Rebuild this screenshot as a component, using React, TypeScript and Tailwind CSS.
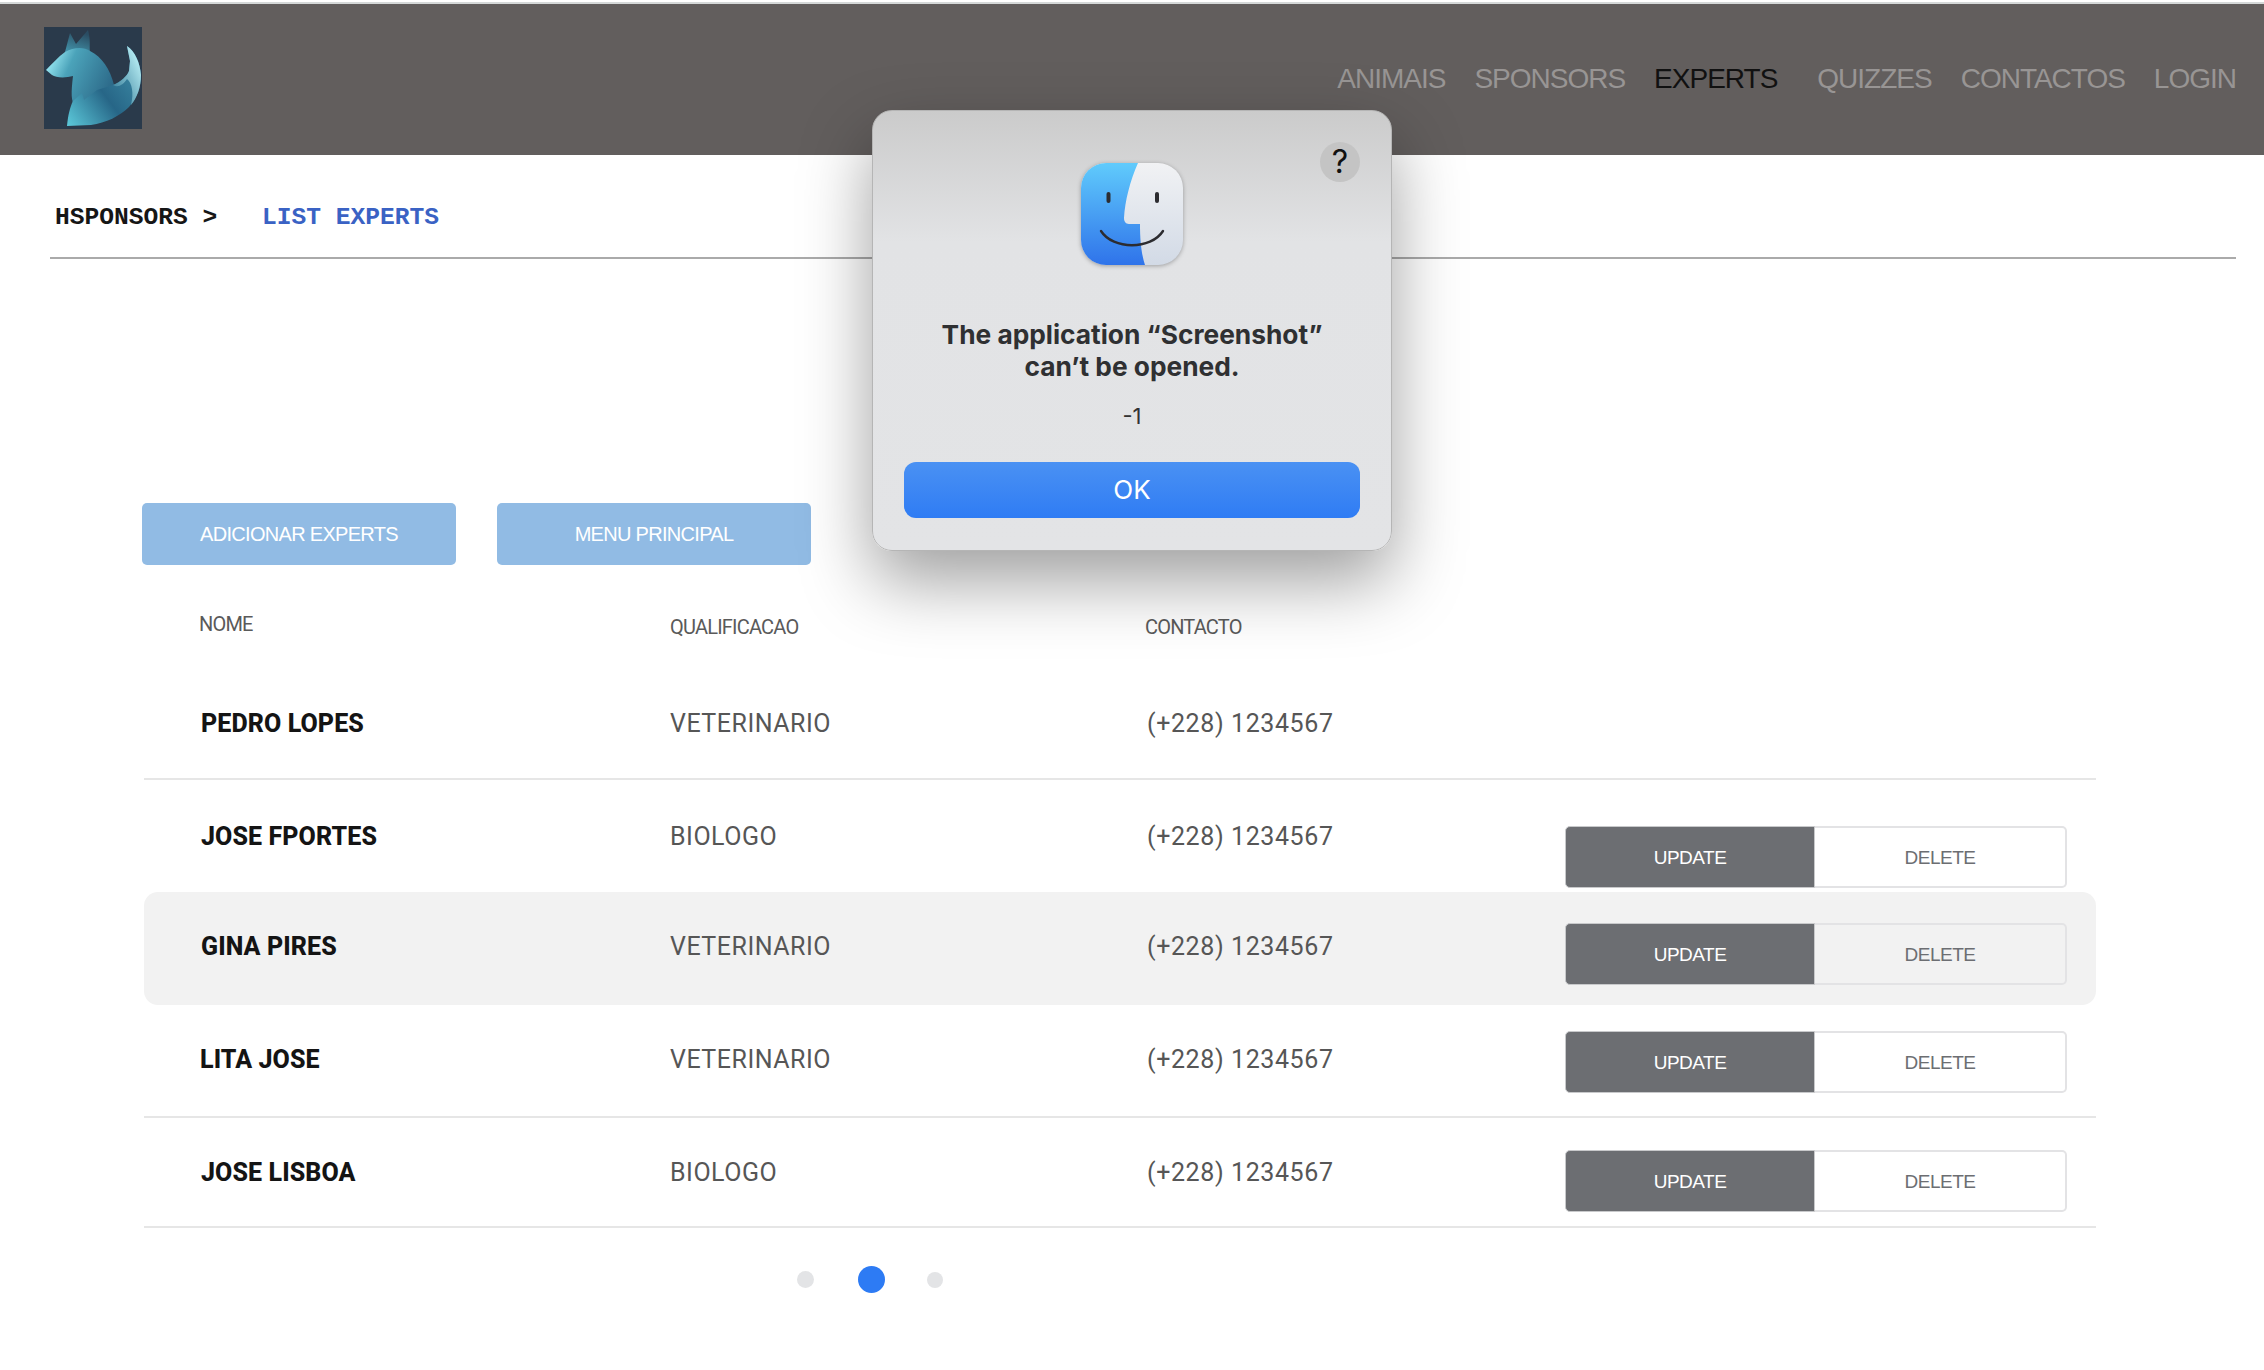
const rows = [
  { name: 'PEDRO LOPES', job: 'VETERINARIO', row: 'h-[113px] border-b-2 border-[#e6e6e6]', actions: false, btn: '', cell: 'bg-white', nameCls: 'pl-[57px]', shift: 'mt-[2px]' },
  { name: 'JOSE FPORTES', job: 'BIOLOGO', row: 'h-[112px]', actions: true, btn: 'mt-[42px]', cell: 'bg-white', nameCls: 'pl-[57px]', shift: 'mt-[2px]' },
  { name: 'GINA PIRES', job: 'VETERINARIO', row: 'h-[113px] rounded-[14px] bg-[#f2f2f2]', actions: true, btn: 'mt-[10px]', cell: 'bg-[#f2f2f2]', nameCls: 'pl-[57px]', shift: 'mb-[3px]' },
  { name: 'LITA JOSE', job: 'VETERINARIO', row: 'h-[113px] border-b-2 border-[#e6e6e6]', actions: true, btn: 'mt-[2px]', cell: 'bg-white', nameCls: 'pl-[56px]', shift: 'mb-[2px]' },
  { name: 'JOSE LISBOA', job: 'BIOLOGO', row: 'h-[110px] border-b-2 border-[#e6e6e6]', actions: true, btn: 'mt-[17px]', cell: 'bg-white', nameCls: 'pl-[57px]', shift: 'mt-[2px]' },
]

function FoxLogo() {
  return (
    <svg width="98" height="102" viewBox="0 0 98 102" className="bg-[#2a3a4b]">
      <defs>
        <linearGradient id="foxBody" x1="0" y1="0.3" x2="1" y2="0.7">
          <stop offset="0" stopColor="#9aeaf4" />
          <stop offset="0.3" stopColor="#4ba3ba" />
          <stop offset="1" stopColor="#2a6585" />
        </linearGradient>
        <linearGradient id="foxEar" x1="0" y1="1" x2="0.4" y2="0">
          <stop offset="0" stopColor="#4396ad" />
          <stop offset="1" stopColor="#2a4c62" />
        </linearGradient>
        <linearGradient id="foxTail" x1="0" y1="1" x2="1" y2="0.2">
          <stop offset="0" stopColor="#5ccadb" />
          <stop offset="0.5" stopColor="#276687" />
          <stop offset="1" stopColor="#3f8fa9" />
        </linearGradient>
        <linearGradient id="foxTip" x1="0" y1="0.9" x2="0.8" y2="0.1">
          <stop offset="0" stopColor="#2f7895" />
          <stop offset="1" stopColor="#b5ebf2" />
        </linearGradient>
      </defs>
      <path d="M21 25 L26 6 L32 17 L44 3 C47 14 45 20 46 25 Z" fill="url(#foxEar)" />
      <path d="M2 43 C8 37 14 30 21 25 C30 20 40 20 46 24 C58 30 66 42 70 58 L60 70 L31 80 C27 74 27 66 29 49 C22 51 12 51 8 48 Z" fill="url(#foxBody)" />
      <path d="M23 99 C24 88 26 80 29 74 L38 66 L40 73 L53 63 L69 58 C77 55 83 49 85 44 L86 34 L83 19 C91 24 96 36 97 48 C97 60 93 71 85 80 C76 89 62 96 47 98 Z" fill="url(#foxTail)" />
      <path d="M69 58 C77 55 83 49 85 44 L86 34 L83 19 C91 24 96 36 97 48 C97 60 93 71 87 78 C90 66 88 56 83 52 C79 58 74 61 69 58 Z" fill="url(#foxTip)" />
    </svg>
  )
}

function FinderIcon() {
  return (
    <svg width="102" height="102" viewBox="0 0 102 102" className="drop-shadow-[0_1px_2px_rgba(0,0,0,0.3)]">
      <defs>
        <linearGradient id="finderLeft" x1="0" y1="0" x2="0" y2="1">
          <stop offset="0" stopColor="#60cbfc" />
          <stop offset="1" stopColor="#2f73ea" />
        </linearGradient>
        <linearGradient id="finderRight" x1="0" y1="0" x2="0" y2="1">
          <stop offset="0" stopColor="#f1f2f4" />
          <stop offset="1" stopColor="#d2dae6" />
        </linearGradient>
        <clipPath id="finderClip">
          <rect width="102" height="102" rx="25" />
        </clipPath>
      </defs>
      <g clipPath="url(#finderClip)">
        <rect width="102" height="102" fill="url(#finderRight)" />
        <path d="M0 0 H57 C49 18 44 38 43 55 C43 60 46 61 49 61 H59 C59 75 60 90 64 102 H0 Z" fill="url(#finderLeft)" />
      </g>
      <rect x="25.5" y="29" width="4" height="11" rx="2" fill="#2c2c30" />
      <rect x="74" y="29" width="4" height="11" rx="2" fill="#2c2c30" />
      <path d="M20 68 C32 87 70 87 82 68" fill="none" stroke="#2c2c30" strokeWidth="2.4" strokeLinecap="round" />
    </svg>
  )
}

function NavItem({ label, active, className }: { label: string; active?: boolean; className?: string }) {
  return (
    <a className={`text-[28px] leading-none tracking-[-1px] ${active ? 'text-[#111111]' : 'text-[#989594]'} ${className ?? ''}`}>
      {label}
    </a>
  )
}

export default function App() {
  return (
    <div className="relative h-[1370px] w-[2264px] overflow-hidden bg-white font-['Liberation_Sans',sans-serif]">
      <div className="mt-[2px] h-[2px] bg-[#d5d8d8]" />
      <header className="flex h-[151px] items-start justify-between bg-[#625e5d] pl-[44px] pr-[28px] pt-[23px]">
        <FoxLogo />
        <nav className="flex items-center gap-[29px] pt-[38px]">
          <NavItem label="ANIMAIS" />
          <NavItem label="SPONSORS" />
          <NavItem label="EXPERTS" active />
          <NavItem label="QUIZZES" className="ml-[11px]" />
          <NavItem label="CONTACTOS" />
          <NavItem label="LOGIN" />
        </nav>
      </header>

      <div className="ml-[50px] flex h-[104px] w-[2186px] items-center border-b-2 border-[#aaaaaa] pb-[2px] pl-[5px] pt-[26px] font-['Liberation_Mono',monospace] text-[24.6px] font-bold">
        <span className="w-[207px] text-[#161616]">HSPONSORS &gt;</span>
        <span className="text-[#3a62c4]">LIST EXPERTS</span>
      </div>

      <div className="ml-[142px] mt-[244px] flex gap-[41px]">
        <button className="h-[62px] w-[314px] rounded-[5px] bg-[#91bbe4] text-[20px] tracking-[-0.7px] text-white">ADICIONAR EXPERTS</button>
        <button className="h-[62px] w-[314px] rounded-[5px] bg-[#91bbe4] text-[20px] tracking-[-0.7px] text-white">MENU PRINCIPAL</button>
      </div>

      <main className="ml-[144px] w-[1952px] font-['Roboto',sans-serif]">
        <div className="flex h-[102px] items-start pt-[47px] text-[20px] leading-[24px] tracking-[-0.8px] text-[#5a5a5a]">
          <div className="w-[526px] pl-[55px]">NOME</div>
          <div className="mt-[3px] w-[475px]">QUALIFICACAO</div>
          <div className="mt-[3px]">CONTACTO</div>
        </div>

        {rows.map((r) => (
          <div key={r.name} className={`flex items-center ${r.row}`}>
            <div className={`w-[526px] text-[25px] font-extrabold tracking-[0.1px] text-[#141414] ${r.nameCls} ${r.shift}`}>{r.name}</div>
            <div className={`w-[477px] text-[25px] tracking-[0.5px] text-[#565656] ${r.shift}`}>{r.job}</div>
            <div className={`w-[418px] text-[25px] tracking-[0.6px] text-[#565656] ${r.shift}`}>(+228) 1234567</div>
            {r.actions && (
              <div className={`flex h-[62px] w-[502px] font-['Liberation_Sans',sans-serif] text-[19px] tracking-[-0.5px] ${r.btn}`}>
                <button className="h-full w-[250px] rounded-l-[5px] border border-[#c8c9cb] bg-[#6c6e72] pt-[3px] text-white">UPDATE</button>
                <button className={`h-full w-[252px] rounded-r-[5px] border-2 border-l-0 border-[#e3e3e5] pt-[3px] text-[#6c6e72] ${r.cell}`}>DELETE</button>
              </div>
            )}
          </div>
        ))}
      </main>

      <div className="ml-[797px] mt-[38px] flex items-center">
        <span className="h-[17px] w-[17px] rounded-full bg-[#e3e4e6]" />
        <span className="ml-[44px] h-[27px] w-[27px] rounded-full bg-[#2d7bf4]" />
        <span className="ml-[42px] h-[16px] w-[16px] rounded-full bg-[#e3e4e6]" />
      </div>

      <div className="absolute left-[872px] top-[110px] flex h-[441px] w-[520px] flex-col items-center rounded-[20px] border border-[#b5b5b5] bg-[linear-gradient(180deg,#cbcbcb_0%,#e2e3e5_30%,#e3e4e6_100%)] shadow-[0_30px_70px_rgba(0,0,0,0.38)]">
        <div className="absolute right-[31px] top-[31px] flex h-[40px] w-[40px] items-center justify-center rounded-full bg-[#c4c4c4] font-['Inter',sans-serif] text-[32px] font-normal text-[#111111]">?</div>
        <div className="mt-[52px]">
          <FinderIcon />
        </div>
        <h2 className="mt-[54px] text-center font-['Inter',sans-serif] text-[26.3px] font-bold leading-[32px] text-[#2f3032]">
          The application “Screenshot”
          <br />
          can’t be opened.
        </h2>
        <p className="mt-[19px] font-['Inter',sans-serif] text-[22px] leading-[28px] text-[#333333]">-1</p>
        <button className="mt-[32px] h-[56px] w-[456px] rounded-[12px] bg-[linear-gradient(180deg,#4a91f3_0%,#2f7cf4_100%)] pb-[2px] font-['Inter',sans-serif] text-[26px] font-normal text-white">OK</button>
      </div>
    </div>
  )
}
